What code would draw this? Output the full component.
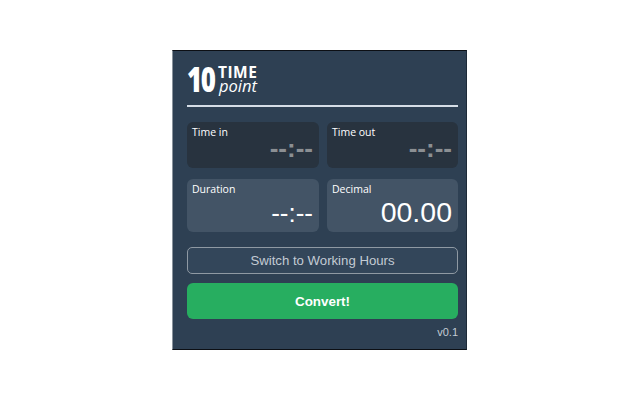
<style>
:global(body) { margin: 0; background: #fff; }
.page { width: 640px; height: 400px; display: flex; justify-content: center; align-items: flex-start; padding: 50px 1px 0 0; box-sizing: border-box; }
.panel { width: 295px; height: 300px; box-sizing: border-box; background: #2e4053; border-top: 1px solid #0c0f14; border-bottom: 1px solid #0c0f14; border-left: 1px solid #8a939c; border-right: 1px solid #1d2a38; padding: 13px 8px 0 14px; font-family: "Open Sans", sans-serif; color: #fff; display: flex; flex-direction: column; }
.logo { display: flex; align-items: center; height: 30px; gap: 3px; }
.ten { font-weight: 800; font-size: 36px; letter-spacing: -2px; line-height: 30px; width: 28px; transform: scaleX(0.72); transform-origin: left center; }
.words { display: flex; flex-direction: column; }
.time { font-weight: 700; font-size: 15.5px; line-height: 14px; letter-spacing: 0.5px; }
.point { font-style: italic; font-weight: 400; font-size: 16.5px; line-height: 14px; padding-left: 1px; }
hr { margin: 11px 0 15px; border: 0; height: 2px; background: #d5dde6; width: 271px; }
.grid { display: grid; grid-template-columns: 132px 131px; gap: 11px 8px; }
.card { border-radius: 6px; padding: 4px 6px 0 5px; box-sizing: border-box; display: flex; flex-direction: column; }
.dark { background: #28333f; height: 46px; }
.light { background: #435466; height: 53px; }
.label { font-size: 10.5px; line-height: 13px; }
.value { text-align: right; font-family: "Liberation Sans", sans-serif; }
.dark .value { color: #8b8f93; font-weight: 700; font-size: 26px; line-height: 18px; }
.light .value { font-size: 26px; line-height: 26px; margin-top: 4px; }
.light .value.big { font-size: 28.5px; line-height: 30px; margin-top: 1px; }
.switch { margin-top: 15px; height: 27px; width: 271px; box-sizing: border-box; border: 1.5px solid #8f99a3; border-radius: 5px; background: #33465a; color: #c3cbd4; font-family: "Liberation Sans", sans-serif; font-size: 13.2px; padding: 0; }
.convert { margin-top: 9px; height: 36px; width: 271px; border: 0; border-radius: 6px; background: #27ae60; color: #fff; font-family: "Liberation Sans", sans-serif; font-weight: 700; font-size: 13.4px; padding: 0; }
.ver { width: 271px; text-align: right; margin-top: 7px; font-family: "Liberation Sans", sans-serif; font-size: 11px; line-height: 13px; color: #c3cbd4; }
</style>

<div class="page">
  <div class="panel">
    <div class="logo">
      <span class="ten">10</span>
      <span class="words"><span class="time">TIME</span><span class="point">point</span></span>
    </div>
    <hr />
    <div class="grid">
      <div class="card dark"><span class="label">Time in</span><span class="value">--:--</span></div>
      <div class="card dark"><span class="label">Time out</span><span class="value">--:--</span></div>
      <div class="card light"><span class="label">Duration</span><span class="value">--:--</span></div>
      <div class="card light"><span class="label">Decimal</span><span class="value big">00.00</span></div>
    </div>
    <button class="switch">Switch to Working Hours</button>
    <button class="convert">Convert!</button>
    <div class="ver">v0.1</div>
  </div>
</div>
